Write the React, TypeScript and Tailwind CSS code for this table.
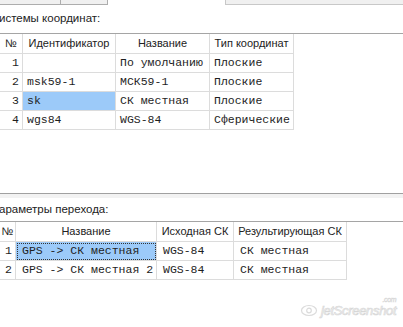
import React from 'react';

type Col = { title: string; width: number };

const mono = "font-['Liberation_Mono','Courier_New',monospace]";
const sans = "font-['Liberation_Sans',Arial,sans-serif]";

const systemCols: Col[] = [
  { title: '№', width: 23 },
  { title: 'Идентификатор', width: 93 },
  { title: 'Название', width: 94 },
  { title: 'Тип координат', width: 84 },
];

const systems = [
  ['1', '', 'По умолчанию', 'Плоские'],
  ['2', 'msk59-1', 'МСК59-1', 'Плоские'],
  ['3', 'sk', 'СК местная', 'Плоские'],
  ['4', 'wgs84', 'WGS-84', 'Сферические'],
];

const transCols: Col[] = [
  { title: '№', width: 16 },
  { title: 'Название', width: 141 },
  { title: 'Исходная СК', width: 77 },
  { title: 'Результирующая СК', width: 113 },
];

const transitions = [
  ['1', 'GPS -> СК местная', 'WGS-84', 'СК местная'],
  ['2', 'GPS -> СК местная 2', 'WGS-84', 'СК местная'],
];

interface GridProps {
  cols: Col[];
  rows: string[][];
  selected: [number, number];
  focusRect?: boolean;
  pad: string;
}

const Grid: React.FC<GridProps> = ({ cols, rows, selected, focusRect, pad }) => (
  <div className="border-t border-[#a5a5a5]">
    <div className="flex">
      {cols.map((c) => (
        <div
          key={c.title}
          style={{ width: c.width }}
          className={`h-[20px] shrink-0 border-r border-b border-[#dcdcdc] flex items-center justify-center text-[11px] text-[#222] whitespace-nowrap ${sans}`}
        >
          {c.title}
        </div>
      ))}
    </div>
    {rows.map((r, ri) => (
      <div key={ri} className="flex">
        {r.map((v, ci) => {
          const sel = selected[0] === ri && selected[1] === ci;
          const num = ci === 0;
          return (
            <div
              key={ci}
              style={{ width: cols[ci].width }}
              className={`h-[19px] shrink-0 border-r border-b border-[#dcdcdc] flex items-center whitespace-nowrap overflow-hidden text-[11.5px] text-[#1e1e1e] ${mono} ${
                num ? 'justify-end pr-[3px]' : pad
              } ${sel ? 'bg-[#9ccaf9]' : ''} ${sel && focusRect ? 'outline-1 outline-dotted outline-[#333] -outline-offset-2' : ''}`}
            >
              {v}
            </div>
          );
        })}
      </div>
    ))}
  </div>
);

export default function App() {
  return (
    <div className={`relative w-[403px] h-[327px] bg-white overflow-hidden ${sans}`}>
      {/* partially visible controls above */}
      <div className="flex h-[5px]">
        <div className="w-[61px] shrink-0 bg-[#f0f0f0] border-r border-b border-[#adadad]" />
        <div className="w-[47px] shrink-0 bg-[#f0f0f0] border-r border-b border-[#adadad]" />
        <div className="w-[117px] shrink-0" />
        <div className="flex-1 bg-[#f0f0f0] border-l border-b border-[#c8c8c8]" />
      </div>

      <div className="h-[28px] flex items-center text-[11.5px] text-[#222] -ml-[1px]">истемы координат:</div>

      <Grid cols={systemCols} rows={systems} selected={[2, 1]} pad="pl-[4px]" />

      <div className="h-[63px]" />

      {/* splitter */}
      <div className="border-t border-[#a0a0a0] h-[5px] bg-[#f2f2f2]" />

      <div className="h-[23px] flex items-center text-[11.5px] text-[#222] -ml-[1px]">араметры перехода:</div>

      <Grid cols={transCols} rows={transitions} selected={[0, 1]} focusRect pad="pl-[6px]" />

      {/* watermark */}
      <div className="absolute left-[300px] top-[301px] flex items-center gap-[3px] opacity-60">
        <svg width="18" height="13" viewBox="0 0 18 13" fill="none" stroke="#c4c4c4" strokeWidth="1.2">
          <ellipse cx="9" cy="6.5" rx="7.5" ry="5" />
          <circle cx="9" cy="6.5" r="2.3" />
        </svg>
        <span className="relative text-[13px] italic tracking-tight text-transparent [-webkit-text-stroke:0.7px_#bdbdbd]">
          jetScreenshot
          <span className="absolute right-[0px] -top-[6px] text-[7px] [-webkit-text-stroke:0.5px_#bdbdbd]">.com</span>
        </span>
      </div>
    </div>
  );
}
